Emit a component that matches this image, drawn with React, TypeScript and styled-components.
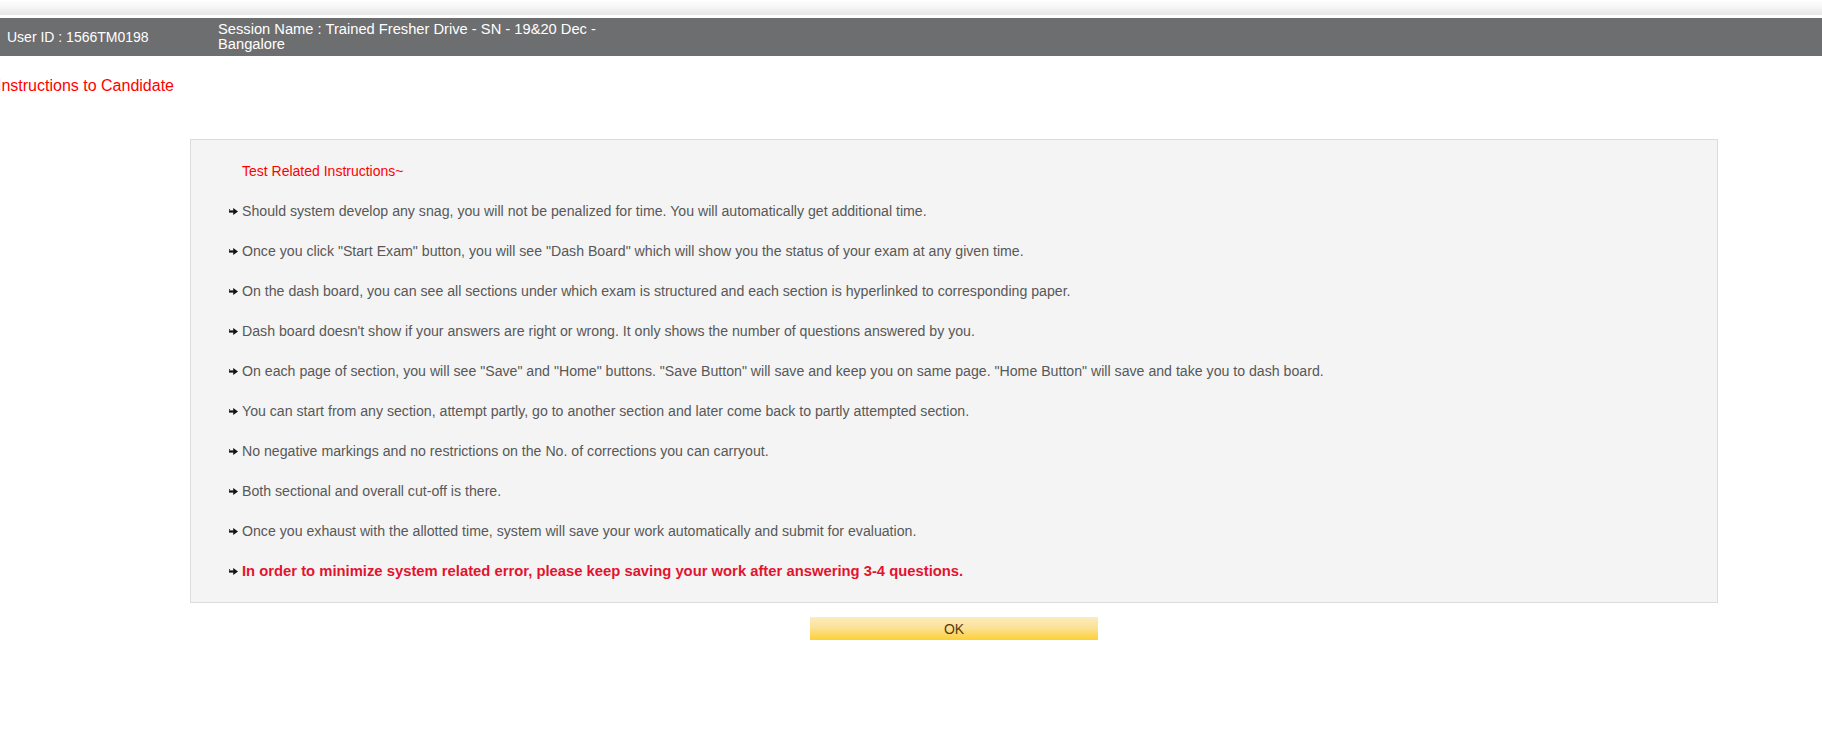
import React from "react";
import styled, { createGlobalStyle } from "styled-components";

const GlobalStyle = createGlobalStyle`
  html, body {
    margin: 0;
    padding: 0;
    background: #ffffff;
    font-family: "Liberation Sans", Arial, sans-serif;
  }
  body { overflow: hidden; }
`;

const Page = styled.div`
  width: 1822px;
  min-height: 745px;
  background: #fff;
`;

const TopStrip = styled.div`
  height: 15px;
  margin-bottom: 3px;
  background: linear-gradient(to bottom, #ffffff 0%, #f4f4f4 55%, #e6e6e6 100%);
`;

const InfoBar = styled.div`
  height: 38px;
  background: #6d6e70;
  display: flex;
  align-items: center;
  color: #ffffff;
  font-size: 14px;
`;

const InfoCell = styled.div<{ $w: number; $pl?: number; $fs?: number }>`
  width: ${(p) => p.$w}px;
  padding-left: ${(p) => p.$pl ?? 0}px;
  font-size: ${(p) => p.$fs ?? 14}px;
  box-sizing: border-box;
  line-height: 15px;
`;

const PageTitle = styled.div`
  margin: 21px 0 0 -3px;
  color: #ff0000;
  font-size: 16px;
  line-height: 18px;
`;

const Main = styled.div`
  width: 1528px;
  margin: 44px 0 0 190px;
  display: flex;
  flex-direction: column;
  align-items: center;
`;

const Panel = styled.div`
  width: 100%;
  box-sizing: border-box;
  background: #f4f4f4;
  border: 1px solid #dcdcdc;
  padding: 11px 0 11px 38px;
`;

const Row = styled.div<{ $variant?: "title" | "normal" | "alert" }>`
  height: 40px;
  display: flex;
  align-items: center;
  gap: 4px;
  font-size: ${(p) => (p.$variant === "alert" ? 14.8 : p.$variant === "title" ? 14 : 14.15)}px;
  font-weight: ${(p) => (p.$variant === "alert" ? 700 : 400)};
  color: ${(p) =>
    p.$variant === "title" ? "#ff0000" : p.$variant === "alert" ? "#e3132f" : "#585858"};
  padding-left: ${(p) => (p.$variant === "title" ? 13 : 0)}px;
  white-space: nowrap;
`;

const ArrowIcon = styled.svg`
  flex: none;
  width: 9px;
  height: 7px;
  margin-top: 1px;
`;

const Arrow = () => (
  <ArrowIcon viewBox="0 0 9 7">
    <rect x="0" y="2.4" width="4.5" height="2.2" fill="#111" />
    <rect x="0" y="1.2" width="1" height="1" fill="#111" />
    <path d="M4.2 0 L9 3.5 L4.2 7 Z" fill="#111" />
  </ArrowIcon>
);

const OkButton = styled.button`
  margin-top: 14px;
  width: 288px;
  height: 23px;
  border: none;
  padding: 0;
  background: linear-gradient(to bottom, #fcecbd 0%, #fbe29a 45%, #fdd035 100%);
  color: #5a3a0c;
  font-family: "Liberation Sans", Arial, sans-serif;
  font-size: 14px;
  cursor: pointer;
`;

const items: { text: string; alert?: boolean }[] = [
  { text: "Should system develop any snag, you will not be penalized for time. You will automatically get additional time." },
  { text: 'Once you click "Start Exam" button, you will see "Dash Board" which will show you the status of your exam at any given time.' },
  { text: "On the dash board, you can see all sections under which exam is structured and each section is hyperlinked to corresponding paper." },
  { text: "Dash board doesn't show if your answers are right or wrong. It only shows the number of questions answered by you." },
  { text: 'On each page of section, you will see "Save" and "Home" buttons. "Save Button" will save and keep you on same page. "Home Button" will save and take you to dash board.' },
  { text: "You can start from any section, attempt partly, go to another section and later come back to partly attempted section." },
  { text: "No negative markings and no restrictions on the No. of corrections you can carryout." },
  { text: "Both sectional and overall cut-off is there." },
  { text: "Once you exhaust with the allotted time, system will save your work automatically and submit for evaluation." },
  { text: "In order to minimize system related error, please keep saving your work after answering 3-4 questions.", alert: true },
];

export default function App() {
  return (
    <Page>
      <GlobalStyle />
      <TopStrip />
      <InfoBar>
        <InfoCell $w={218} $pl={7}>User ID : 1566TM0198</InfoCell>
        <InfoCell $w={420} $fs={14.7}>Session Name : Trained Fresher Drive - SN - 19&amp;20 Dec - Bangalore</InfoCell>
      </InfoBar>
      <PageTitle>Instructions to Candidate</PageTitle>
      <Main>
        <Panel>
          <Row $variant="title">Test Related Instructions~</Row>
          {items.map((it, i) => (
            <Row key={i} $variant={it.alert ? "alert" : "normal"}>
              <Arrow />
              <span>{it.text}</span>
            </Row>
          ))}
        </Panel>
        <OkButton>OK</OkButton>
      </Main>
    </Page>
  );
}
